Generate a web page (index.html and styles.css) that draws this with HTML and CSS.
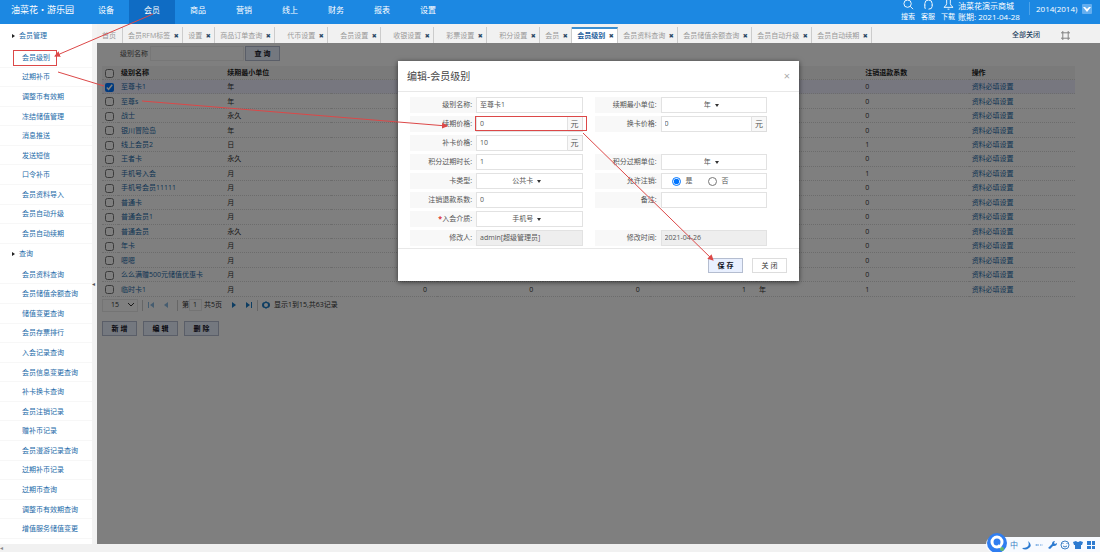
FILE: index.html
```html
<!DOCTYPE html>
<html lang="zh-CN">
<head>
<meta charset="utf-8">
<title>会员级别</title>
<link rel="stylesheet" href="styles.css">
</head>
<body>
<header class="topbar">
  <div class="brand">油菜花・游乐园</div>
  <nav class="nav">
    <a href="#">设备</a><a href="#" class="current">会员</a><a href="#">商品</a><a href="#">营销</a><a href="#">线上</a><a href="#">财务</a><a href="#">报表</a><a href="#">设置</a>
  </nav>
  <div class="tools">
    <a href="#"><svg viewBox="0 0 12 12"><circle cx="5" cy="4" r="4"/><path d="M8 7l3 3"/></svg>搜索</a>
    <a href="#"><svg viewBox="0 0 12 12"><path d="M2 6V4a4 4 0 0 1 8 0v2M2 5v4h1M10 5v2q0 3-4 3"/></svg>客服</a>
    <a href="#"><svg viewBox="0 0 12 12"><path d="M4 0v4q0 2-3 4h10q-3-2-3-4V0M5 10h2"/></svg>下载</a>
  </div>
  <div class="shop"><span>油菜花演示商城</span><span>账期: 2021-04-28</span></div>
  <button class="user" type="button">2014(2014)<svg viewBox="0 0 10 10"><rect width="10" height="10" rx="1"/><path d="M1 3h2l2 2 2-2h2L5 8z"/></svg></button>
</header>

<div class="workspace">
  <aside class="sidebar">
    <h2>会员管理</h2>
    <ul>
      <li><a href="#">会员级别</a></li><li><a href="#">过期补币</a></li><li><a href="#">调整币有效期</a></li><li><a href="#">冻结储值管理</a></li><li><a href="#">消息推送</a></li><li><a href="#">发送短信</a></li><li><a href="#">口令补币</a></li><li><a href="#">会员资料导入</a></li><li><a href="#">会员自动升级</a></li><li><a href="#">会员自动续期</a></li>
    </ul>
    <h2>查询</h2>
    <ul>
      <li><a href="#">会员资料查询</a></li><li><a href="#">会员储值余额查询</a></li><li><a href="#">储值变更查询</a></li><li><a href="#">会员存票排行</a></li><li><a href="#">入会记录查询</a></li><li><a href="#">会员信息变更查询</a></li><li><a href="#">补卡换卡查询</a></li><li><a href="#">会员注销记录</a></li><li><a href="#">赠补币记录</a></li><li><a href="#">会员漫游记录查询</a></li><li><a href="#">过期补币记录</a></li><li><a href="#">过期币查询</a></li><li><a href="#">调整币有效期查询</a></li><li><a href="#">增值服务储值变更</a></li>
    </ul>
  </aside>
  <div class="gutter">◂</div>

  <main class="content">
    <div class="tabs">
      <div class="tab home"><a href="#">首页</a></div>
      <div class="tab"><a href="#">会员RFM标签</a><button type="button">✖</button></div>
      <div class="tab"><a href="#">设置</a><button type="button">✖</button></div>
      <div class="tab"><a href="#">商品订单查询</a><button type="button">✖</button></div>
      <div class="tab wide"><a href="#">代币设置</a><button type="button">✖</button></div>
      <div class="tab wide"><a href="#">会员设置</a><button type="button">✖</button></div>
      <div class="tab wide"><a href="#">收银设置</a><button type="button">✖</button></div>
      <div class="tab wide"><a href="#">彩票设置</a><button type="button">✖</button></div>
      <div class="tab wide"><a href="#">积分设置</a><button type="button">✖</button></div>
      <div class="tab"><a href="#">会员</a><button type="button">✖</button></div>
      <div class="tab active"><a href="#">会员级别</a><button type="button">✖</button></div>
      <div class="tab"><a href="#">会员资料查询</a><button type="button">✖</button></div>
      <div class="tab"><a href="#">会员储值余额查询</a><button type="button">✖</button></div>
      <div class="tab"><a href="#">会员自动升级</a><button type="button">✖</button></div>
      <div class="tab last"><a href="#">会员自动续期</a><button type="button">✖</button></div>
      <a class="close-all" href="#">全部关闭</a>
      <svg class="expand" viewBox="0 0 10 10"><path d="M0 2h2V0M8 0v2h2M10 8H8v2M2 10V8H0M2 2h6v6H2z"/></svg>
    </div>

    <div class="panel">
      <form class="filter">
        <label for="q">级别名称</label><input id="q" type="text"><button class="btn" type="button">查 询</button>
      </form>
      <table class="grid">
        <thead><tr><th class="check"><input type="checkbox" aria-label="全选"></th><th>级别名称</th><th>续期最小单位</th><th></th><th></th><th></th><th></th><th></th><th>注销退款系数</th><th>操作</th></tr></thead>
        <tbody>
          <tr class="selected"><td><input type="checkbox" checked aria-label="选择"></td><td><a href="#">至尊卡1</a></td><td>年</td><td></td><td></td><td></td><td></td><td></td><td>0</td><td><a href="#">资料必填设置</a></td></tr>
          <tr><td><input type="checkbox" aria-label="选择"></td><td><a href="#">至尊s</a></td><td>年</td><td></td><td></td><td></td><td></td><td></td><td>0</td><td><a href="#">资料必填设置</a></td></tr>
          <tr><td><input type="checkbox" aria-label="选择"></td><td><a href="#">战士</a></td><td>永久</td><td></td><td></td><td></td><td></td><td></td><td>0</td><td><a href="#">资料必填设置</a></td></tr>
          <tr><td><input type="checkbox" aria-label="选择"></td><td><a href="#">银川冒险岛</a></td><td>年</td><td></td><td></td><td></td><td></td><td></td><td>0</td><td><a href="#">资料必填设置</a></td></tr>
          <tr><td><input type="checkbox" aria-label="选择"></td><td><a href="#">线上会员2</a></td><td>日</td><td></td><td></td><td></td><td></td><td></td><td>1</td><td><a href="#">资料必填设置</a></td></tr>
          <tr><td><input type="checkbox" aria-label="选择"></td><td><a href="#">王者卡</a></td><td>永久</td><td></td><td></td><td></td><td></td><td></td><td>0</td><td><a href="#">资料必填设置</a></td></tr>
          <tr><td><input type="checkbox" aria-label="选择"></td><td><a href="#">手机号入会</a></td><td>月</td><td></td><td></td><td></td><td></td><td></td><td>1</td><td><a href="#">资料必填设置</a></td></tr>
          <tr><td><input type="checkbox" aria-label="选择"></td><td><a href="#">手机号会员11111</a></td><td>月</td><td></td><td></td><td></td><td></td><td></td><td>0</td><td><a href="#">资料必填设置</a></td></tr>
          <tr><td><input type="checkbox" aria-label="选择"></td><td><a href="#">普通卡</a></td><td>月</td><td></td><td></td><td></td><td></td><td></td><td>0</td><td><a href="#">资料必填设置</a></td></tr>
          <tr><td><input type="checkbox" aria-label="选择"></td><td><a href="#">普通会员1</a></td><td>月</td><td></td><td></td><td></td><td></td><td></td><td>0</td><td><a href="#">资料必填设置</a></td></tr>
          <tr><td><input type="checkbox" aria-label="选择"></td><td><a href="#">普通会员</a></td><td>永久</td><td></td><td></td><td></td><td></td><td></td><td>0</td><td><a href="#">资料必填设置</a></td></tr>
          <tr><td><input type="checkbox" aria-label="选择"></td><td><a href="#">年卡</a></td><td>月</td><td></td><td></td><td></td><td></td><td></td><td>0</td><td><a href="#">资料必填设置</a></td></tr>
          <tr><td><input type="checkbox" aria-label="选择"></td><td><a href="#">嗯嗯</a></td><td>月</td><td></td><td></td><td></td><td></td><td></td><td>0</td><td><a href="#">资料必填设置</a></td></tr>
          <tr><td><input type="checkbox" aria-label="选择"></td><td><a href="#">么么满赠500元储值优惠卡</a></td><td>月</td><td></td><td></td><td></td><td></td><td></td><td>0</td><td><a href="#">资料必填设置</a></td></tr>
          <tr><td><input type="checkbox" aria-label="选择"></td><td><a href="#">临时卡1</a></td><td>月</td><td class="num">0</td><td class="num">0</td><td class="num">0</td><td class="num">1</td><td>年</td><td>1</td><td><a href="#">资料必填设置</a></td></tr>
        </tbody>
      </table>
      <div class="pager">
        <span class="size"><select aria-label="每页条数"><option>15</option></select><svg viewBox="0 0 8 8"><path d="M1 2l3 3 3-3"/></svg></span>
        <i class="sep"></i>
        <button class="dim" type="button" aria-label="首页"><svg viewBox="0 0 8 8"><path d="M1 1h1v6H1zM7 1v6L3 4z"/></svg></button>
        <button class="dim" type="button" aria-label="上一页"><svg viewBox="0 0 8 8"><path d="M6 1v6L2 4z"/></svg></button>
        <i class="sep"></i>
        <label for="page">第</label><input id="page" type="text" value="1"><span>共5页</span>
        <button type="button" class="next" aria-label="下一页"><svg viewBox="0 0 8 8"><path d="M2 1v6l4-3z"/></svg></button>
        <button type="button" aria-label="末页"><svg viewBox="0 0 8 8"><path d="M6 1h1v6H6zM1 1v6l4-3z"/></svg></button>
        <i class="sep"></i>
        <button type="button" aria-label="刷新"><svg viewBox="0 0 8 8"><path d="M4 0l1 1a3 3 0 0 1 0 6L4 8 3 7a3 3 0 0 1 0-6zM4 2a2 2 0 1 0 0 4 2 2 0 0 0 0-4z" fill-rule="evenodd"/></svg></button>
        <span>显示1到15,共63记录</span>
      </div>
      <div class="actions"><button class="btn" type="button">新 增</button><button class="btn" type="button">编 辑</button><button class="btn" type="button">删 除</button></div>

      <div class="overlay">
        <form class="modal">
          <div class="modal-head"><h1>编辑-会员级别</h1><button type="button" aria-label="关闭窗口">×</button></div>
          <div class="fields">
            <div class="field"><label for="f1">级别名称:</label><input id="f1" type="text" value="至尊卡1"></div>
            <div class="field"><label for="f2">续期最小单位:</label><span class="pick"><select id="f2"><option>年</option></select></span></div>
            <div class="field"><label for="f3">续期价格:</label><input id="f3" type="text" value="0"><span class="unit">元</span></div>
            <div class="field"><label for="f4">换卡价格:</label><input id="f4" type="text" value="0"><span class="unit">元</span></div>
            <div class="field"><label for="f5">补卡价格:</label><input id="f5" type="text" value="10"><span class="unit">元</span></div>
            <div class="field left"><label for="f6">积分过期时长:</label><input id="f6" type="text" value="1"></div>
            <div class="field"><label for="f7">积分过期单位:</label><span class="pick"><select id="f7"><option>年</option></select></span></div>
            <div class="field"><label for="f8">卡类型:</label><span class="pick"><select id="f8"><option>公共卡</option></select></span></div>
            <div class="field"><span class="label">允许注销:</span><span class="radios"><label><input type="radio" name="cancel" checked>是</label><label><input type="radio" name="cancel">否</label></span></div>
            <div class="field"><label for="f9">注销退款系数:</label><input id="f9" type="text" value="0"></div>
            <div class="field"><label for="f10">备注:</label><input id="f10" type="text"></div>
            <div class="field"><label for="f11"><b>*</b>入会介质:</label><span class="pick"><select id="f11"><option>手机号</option></select></span></div>
            <div class="field left"><label for="f12">修改人:</label><input id="f12" type="text" value="admin[超级管理员]" readonly></div>
            <div class="field"><label for="f13">修改时间:</label><input id="f13" type="text" value="2021-04-26" readonly></div>
          </div>
          <div class="modal-foot"><button class="save" type="button">保 存</button><button type="button">关 闭</button></div>
        </form>
      </div>
    </div>
  </main>
</div>
<footer class="scroll">◂</footer>

<div class="ime">
  <svg class="ime-logo" viewBox="0 0 20 20"><circle cx="10" cy="10" r="10" fill="#2f7df0"/><circle cx="10" cy="9" r="5" fill="none" stroke="#fff" stroke-width="3"/><path d="M11 12l4 4" stroke="#fff" stroke-width="2"/><circle cx="15" cy="16" r="2" fill="#63b96b"/></svg>
  <span>中</span>
  <svg viewBox="0 0 10 10"><path d="M7 1q3 7-6 7 3 3 7 0t-1-7z"/></svg>
  <svg viewBox="0 0 10 10"><path d="M1 5l2-1v2zM3 4.500h2v1H3zM6 4.500h2v1H6zM9 5L7 4v2z" opacity=".7"/></svg>
  <svg viewBox="0 0 10 10"><path d="M1 8l4-4q0-3 3-3L7 3l1 1 2-1q0 3-3 3H6L3 9z"/></svg>
  <svg viewBox="0 0 10 10"><g fill="none" stroke="#3c7fc4"><circle cx="5" cy="5" r="4"/><path d="M3 6q2 2 4 0M3 3v1M7 3v1"/></g></svg>
  <svg viewBox="0 0 10 10"><path d="M0 2l3-1q2 2 4 0l3 1-1 3H8v4H2V5H1z"/></svg>
  <svg viewBox="0 0 10 10"><path d="M1 1h4v4H1zM6 1h3v4H6zM1 6h4v3H1zM6 6h3v3H6z"/></svg>
</div>

<svg class="marks" viewBox="0 0 1100 552" width="1100" height="552">
  <defs><marker id="head" viewBox="0 0 6 6" refX="5" refY="3" markerWidth="6" markerHeight="6" orient="auto"><path d="M0 0l6 3-6 3z"/></marker></defs>
  <rect x="13.500" y="50.500" width="43" height="15"/>
  <rect x="475.500" y="116.500" width="111" height="14"/>
  <path class="arrow" d="M153 14L55 56"/>
  <path d="M58 72L104 86"/>
  <path class="arrow" d="M142 101L447 126"/>
  <path class="arrow" d="M583 133L713 260"/>
</svg>
</body>
</html>
```

FILE: styles.css
```css
* { box-sizing: border-box; }
body {
  margin: 0;
  height: 100vh;
  display: flex;
  flex-direction: column;
  overflow: hidden;
  position: relative;
  font: 7px/12px "Open Sans", "Noto Sans CJK SC", sans-serif;
  color: #333;
  background: #fff;
}
a { color: inherit; text-decoration: none; white-space: nowrap; }
button, input, select { font: inherit; color: inherit; margin: 0; padding: 0; border: 0; background: none; border-radius: 0; outline: 0; }
h1, h2, ul { margin: 0; padding: 0; font-weight: 400; list-style: none; }
svg { display: block; flex: none; }

.topbar { flex: none; height: 24px; display: flex; background: #1c88e2; color: #fff; font-size: 8px; overflow: hidden; }
.brand { width: 83px; padding-left: 11px; font-size: 9px; line-height: 20px; white-space: nowrap; }
.nav { display: flex; flex: 1; }
.nav a { width: 46px; text-align: center; line-height: 20px; }
.nav .current { background: #0f6cc4; }
.tools { display: flex; gap: 6px; margin-right: 3px; font-size: 7px; }
.tools a { display: flex; flex-direction: column; align-items: center; width: 14px; line-height: 11px; }
.tools svg { width: 11px; height: 11px; fill: none; stroke: #fff; }
.shop { display: flex; flex-direction: column; width: 71px; line-height: 11px; white-space: nowrap; }
.user { display: flex; align-items: center; justify-content: space-between; width: 71px; height: 13px; margin: 2px 0; padding: 0 8px 0 6px; border-left: 1px solid #4ca3ea; }
.user svg { width: 10px; height: 10px; fill: #64aeef; }
.user path { fill: #fff; }

.workspace { flex: 1; display: flex; min-height: 0; }
.sidebar { width: 92px; display: grid; grid-template-rows: 24px 10fr 21px 14fr; padding-bottom: 5px; color: #1b6aa8; }
.sidebar h2 { display: flex; align-items: center; gap: 4px; padding-left: 12px; font-size: 7px; }
.sidebar h2::before { content: ""; border: 2px solid transparent; border-left: 3px solid #222; border-right: 0; }
.sidebar ul { display: grid; grid-auto-rows: 1fr; }
.sidebar li { display: flex; align-items: center; padding: 1px 0 0 22px; border-bottom: 1px solid #f7f7f7; }
.gutter { width: 5px; display: flex; align-items: center; background: #f3f3f3; color: #555; font-size: 6px; }

.content { flex: 1; min-width: 0; display: flex; flex-direction: column; }
.tabs { flex: none; height: 19px; padding-top: 3px; display: flex; background: #f1f1f1; color: #999; }
.tab { display: flex; align-items: center; gap: 3px; padding: 2px 3px 0 5px; border-right: 1px solid #ccc; }
.tab.home { padding-right: 6px; }
.tab.wide { padding-left: 12px; }
.tab button { width: 6px; color: #2c4a66; font-size: 6px; font-family: "DejaVu Sans", sans-serif; }
.tab.active { background: #fff; border-top: 2px solid #3c8fd0; padding-top: 0; color: #1d5e9c; font-weight: 600; }
.tab.last { margin-right: auto; }
.close-all { color: #24415f; font-weight: 500; line-height: 15px; margin-right: 21px; }
.expand { width: 9px; height: 9px; margin: 4px 30px 0 0; fill: none; stroke: #777; }

.panel { flex: 1; position: relative; padding: 3px 25px 0 5px; background: #fff; }
.filter { display: flex; align-items: center; height: 15px; margin-bottom: 5px; }
.filter label { width: 48px; padding-left: 18px; color: #555; white-space: nowrap; }
.filter input { width: 94px; height: 15px; margin-right: 1px; border: 1px solid #eee; }
.btn { width: 35px; height: 15px; border: 1px solid #b4bdd0; background: #e9f0ff; color: #112; font-weight: 600; }

.grid { width: 100%; height: 231px; table-layout: fixed; border-collapse: collapse; }
.grid th, .grid td { padding: 1px 0 0 3px; line-height: 12px; text-align: left; white-space: nowrap; border-bottom: 1px dotted #d8d8d8; }
.grid th { background: #f4f4f4; font-weight: 600; color: #222; }
.grid .check { width: 16px; }
.grid .num { text-align: right; padding-right: 10px; }
.grid a { color: #1b6aa8; }
.grid .selected td { background: #eeeeff; }
.grid input { display: block; width: 9px; height: 9px; }

.pager { display: flex; align-items: center; height: 16px; white-space: nowrap; }
.pager svg { width: 8px; height: 8px; fill: #1b7ac4; }
.pager button { margin-right: 4px; }
.pager .dim, .pager .next { margin-right: 7px; }
.pager .dim { opacity: .5; }
.pager .next { margin-left: 8px; }
.pager input { width: 13px; height: 12px; margin: 0 2px 0 0; padding-left: 3px; border: 1px solid #e8e8e8; }
.size { display: flex; align-items: center; width: 36px; height: 13px; padding: 0 2px 0 8px; border: 1px solid #e8e8e8; }
.size select { appearance: none; flex: 1; }
.pager .size svg { fill: none; stroke: #333; }
.sep { width: 1px; height: 11px; margin: 0 4px; background: #ccc; }
.pager button + .sep { margin-left: 0; }
.actions { display: flex; gap: 6px; padding-top: 8px; }

.overlay { position: absolute; inset: 0; display: flex; justify-content: center; align-items: flex-start; padding-top: 18px; background: rgba(0, 0, 0, .5); }
.modal { width: 401px; background: #fff; color: #555; box-shadow: 0 1px 5px rgba(0, 0, 0, .6); }
.modal-head { display: flex; justify-content: space-between; align-items: center; height: 31px; padding: 0 9px; border-bottom: 1px solid #e8e8e8; }
.modal-head h1 { font-size: 10px; color: #444; }
.modal-head button { font-size: 11px; color: #aaa; }
.fields { display: grid; grid-template-columns: repeat(2, minmax(0, 1fr)); gap: 3px 12px; padding: 5px 32px 2px 12px; }
.field { display: flex; height: 16px; }
.field.left { grid-column: 1; }
.field > label, .field > .label { flex: none; width: 66px; padding-right: 4px; background: #f8f8f8; text-align: right; line-height: 16px; white-space: nowrap; }
.field b { color: #d33; }
.field > input, .pick, .radios { flex: 1; min-width: 0; border: 1px solid #e2e2e2; padding-left: 3px; }
.field > input:read-only { background: #eee; }
.unit { flex: none; width: 15px; border: 1px solid #ddd; border-left: 0; background: #f8f8f8; text-align: center; line-height: 14px; font-size: 8px; }
.pick { display: flex; justify-content: center; align-items: center; gap: 4px; padding-right: 8px; }
.pick select { appearance: none; field-sizing: content; }
.pick::after { content: ""; border: 2px solid transparent; border-top: 3px solid #333; border-bottom: 0; }
.radios { display: flex; align-items: center; gap: 15px; padding-left: 10px; }
.radios label { display: flex; align-items: center; gap: 5px; }
.radios input { width: 9px; height: 9px; }
.modal-foot { display: flex; justify-content: flex-end; gap: 9px; padding: 9px 12px 8px; border-top: 1px solid #e8e8e8; }
.modal-foot button { width: 35px; height: 15px; border: 1px solid #ddd; color: #333; }
.modal-foot .save { border-color: #b4bdd0; background: #e9f0ff; color: #112; font-weight: 600; }

.scroll { flex: none; height: 8px; background: #f1f1f1; color: #888; font-size: 6px; line-height: 8px; }
.ime { position: absolute; right: 0; bottom: 0; height: 15px; display: flex; align-items: center; gap: 3px; padding: 0 4px 0 24px; border-radius: 7px 0 0 7px; background: #f7faff; color: #3c7fc4; font-size: 8px; }
.ime svg { width: 10px; height: 10px; fill: #2c7ad0; }
.ime .ime-logo { position: absolute; left: 1px; bottom: -1px; width: 20px; height: 20px; }
.marks { position: absolute; left: 0; top: 0; pointer-events: none; fill: none; stroke: #dc4848; }
.marks marker path { fill: #dc4848; stroke: none; }
.marks .arrow { marker-end: url(#head); }
```
